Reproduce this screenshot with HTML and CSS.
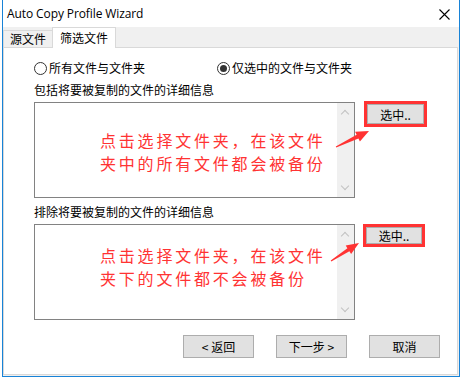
FILE: index.html
```html
<!DOCTYPE html>
<html>
<head>
<meta charset="utf-8">
<link rel="stylesheet" href="styles.css">
</head>
<body>
<div class="window">
  <div class="titlebar">
    <span class="title">Auto Copy Profile Wizard</span>
    <svg class="close" width="11" height="11" viewBox="0 0 11 11"><path d="M0.5 0.5L10.5 10.5M10.5 0.5L0.5 10.5" stroke="#000" stroke-width="1.1" fill="none"/></svg>
  </div>
  <div class="tabs">
    <div class="tab">源文件</div>
    <div class="tab active">筛选文件</div>
  </div>
  <div class="panel">
    <div class="radios">
      <label class="radio r1"><span class="circle"></span>所有文件与文件夹</label>
      <label class="radio r2"><span class="circle checked"></span>仅选中的文件与文件夹</label>
    </div>
    <div class="label l1">包括将要被复制的文件的详细信息</div>
    <div class="row">
      <div class="listbox">
        <div class="note n1">点击选择文件夹，在该文件<br>夹中的所有文件都会被备份</div>
        <div class="scroll"><span class="up"></span><span class="down"></span></div>
      </div>
      <div class="redbox rb1"><div class="btn">选中..</div></div>
    </div>
    <div class="label l2">排除将要被复制的文件的详细信息</div>
    <div class="row">
      <div class="listbox">
        <div class="note n2">点击选择文件夹，在该文件<br>夹下的文件都不会被备份</div>
        <div class="scroll"><span class="up"></span><span class="down"></span></div>
      </div>
      <div class="redbox rb2"><div class="btn">选中..</div></div>
    </div>
    <div class="footer">
      <div class="fbtn">&lt; 返回</div>
      <div class="fbtn">下一步 &gt;</div>
      <div class="fbtn">取消</div>
    </div>
  </div>
</div>
<svg class="arrow a1" width="40" height="24" viewBox="0 0 40 24"><polygon points="1.2,18.5 23.4,9.4 24.9,12.6 34,2 20.1,2.7 21.6,5.8 0.8,17.5" fill="#f33"/></svg>
<svg class="arrow a2" width="40" height="24" viewBox="0 0 40 24"><polygon points="1.3,20.4 19.4,10.3 21.1,13 29,2 15.7,4.6 17.4,7.3 0.7,19.6" fill="#f33"/></svg>
</body>
</html>
```
FILE: styles.css
```css
* { box-sizing: border-box; }
html, body { margin: 0; padding: 0; }
body {
  width: 462px; height: 379px; overflow: hidden; background: #fff;
  font-family: "Noto Sans CJK SC", "Noto Sans", sans-serif; font-size: 12px; color: #000;
  position: relative;
}
.window {
  margin-left: 2px; width: 458px; height: 377px;
  border-left: 1px solid #1883d7; border-right: 1px solid #1883d7; border-bottom: 1px solid #1883d7;
  background: #f0f0f0; display: flex; flex-direction: column;
}
.titlebar {
  height: 27px; background: #fff; display: flex; align-items: center; justify-content: space-between;
  padding: 0 9px 0 4px; flex: none;
}
.title { font-family: "Open Sans", "Noto Sans", sans-serif; font-size: 12px; letter-spacing: -0.1px; }
.close { margin-top: 1px; }
.tabs { height: 20px; display: flex; align-items: flex-end; padding-left: 0; flex: none; position: relative; z-index: 1; }
.tab {
  height: 17px; width: 49px; border: 1px solid #d9d9d9; border-bottom: none; border-right: none;
  background: #f0f0f0; display: flex; align-items: center; justify-content: center; font-size: 12px; line-height: 1;
}
.tab.active { height: 21px; width: 64px; background: #fff; border-right: 1px solid #d9d9d9; margin-bottom: -1px; }
.panel {
  margin: 0 1px 0 0; height: 328px; background: #fff; border: 1px solid #d9d9d9;
  padding: 13px 17px 0 30px; display: flex; flex-direction: column;
}
.radios { height: 14px; display: flex; align-items: center; }
.radio { display: flex; align-items: center; line-height: 14px; }
.r2 { margin-left: 72px; }
.circle {
  width: 13px; height: 13px; border: 1px solid #333; border-radius: 50%; margin-right: 2px; position: relative; background: #fff;
}
.circle.checked::after {
  content: ""; position: absolute; left: 2px; top: 2px; width: 7px; height: 7px; border-radius: 50%; background: #333;
}
.label { line-height: 15px; }
.l1 { margin-top: 7px; }
.l2 { margin-top: 6px; }
.row { display: flex; align-items: flex-start; margin-top: 5px; }
.listbox {
  width: 321px; height: 96px; border: 1px solid #828282; background: #fff; display: flex; justify-content: space-between;
}
.note {
  color: #f33; font-size: 16px; letter-spacing: 2.8px; line-height: 23px; padding: 26px 0 0 65px; white-space: nowrap;
  font-family: "Noto Sans CJK SC", sans-serif; font-weight: 400;
}
.n2 { padding-top: 19px; }
.scroll { width: 17px; height: 100%; background: #f0f0f0; position: relative; flex: none; }
.scroll .up, .scroll .down {
  position: absolute; left: 5px; width: 6px; height: 6px; border-left: 1px solid #c2c2c2; border-top: 1px solid #c2c2c2;
}
.scroll .up { top: 8px; transform: rotate(45deg); }
.scroll .down { bottom: 8px; transform: rotate(225deg); }
.redbox { border: 3px solid #f33; background: #e1e1e1; }
.rb1 { margin-left: 9px; margin-top: -1px; width: 63px; height: 26px; }
.rb2 { margin-left: 8px; width: 62px; height: 23px; }
.btn { height: 100%; display: flex; align-items: center; justify-content: center; border: 1px solid #adadad; font-size: 12px; }
.footer { display: flex; justify-content: flex-end; gap: 22px; margin-top: 15px; }
.fbtn {
  width: 71px; height: 23px; background: #e1e1e1; border: 1px solid #adadad; display: flex; align-items: center; justify-content: center;
}
.arrow { position: absolute; }
.a1 { left: 335px; top: 129px; }
.a2 { left: 330px; top: 241px; }
```
